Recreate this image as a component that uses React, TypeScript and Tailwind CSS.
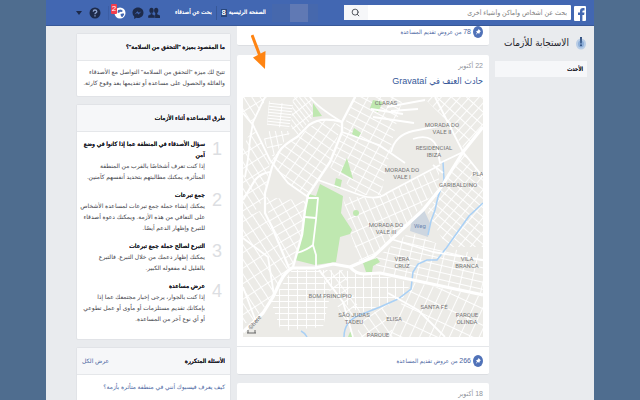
import React from 'react';
import { Search } from 'lucide-react';

const tips = [
  {
    title: ['سؤال الأصدقاء في المنطقة عما إذا كانوا في وضع', 'آمن'],
    lines: ['إذا كنت تعرف أشخاصًا بالقرب من المنطقة', 'المتأثرة، يمكنك مطالبتهم بتحديد أنفسهم كآمنين.'],
  },
  {
    title: ['جمع تبرعات'],
    lines: ['يمكنك إنشاء حملة جمع تبرعات لمساعدة الأشخاص', 'على التعافي من هذه الأزمة. ويمكنك دعوة أصدقاء', 'للتبرع وإظهار الدعم أيضًا.'],
  },
  {
    title: ['التبرع لصالح حملة جمع تبرعات'],
    lines: ['يمكنك إظهار دعمك من خلال التبرع. فالتبرع', 'بالقليل له مفعوله الكبير.'],
  },
  {
    title: ['عرض مساعدة'],
    lines: ['إذا كنت بالجوار، يرجى إخبار مجتمعك عما إذا', 'بإمكانك تقديم مستلزمات أو مأوى أو عمل تطوعي', 'أو أي نوع آخر من المساعدة.'],
  },
];

const places = [
  { x: 143, y: 8, rows: ['CLARAS'] },
  { x: 199, y: 30, rows: ['MORADA DO', 'VALE II'] },
  { x: 191, y: 53, rows: ['RESIDENCIAL', 'IBIZA'] },
  { x: 159, y: 75, rows: ['MORADA DO', 'VALE I'] },
  { x: 215, y: 90, rows: ['GARIBALDINO'] },
  { x: 235, y: 79, rows: ['PLA'] },
  { x: 143, y: 130, rows: ['MORADA DO', 'VALE III'] },
  { x: 159, y: 164, rows: ['VERA', 'CRUZ'] },
  { x: 224, y: 164, rows: ['VILA', 'BRANCA'] },
  { x: 87, y: 201, rows: ['BOM PRINCÍPIO'] },
  { x: 111, y: 220, rows: ['SÃO JUDAS', 'TADEU'] },
  { x: 151, y: 224, rows: ['ELISA'] },
  { x: 191, y: 212, rows: ['SANTA FÉ'] },
  { x: 224, y: 220, rows: ['PARQUE', 'OLINDA'] },
  { x: 135, y: 240, rows: ['PARQUE'] },
];

const grids = [
  { id: 'g1', w: 13, h: 3, angle: 6, area: 'M26 4L50 8L46 32L24 28Z' },
  { id: 'g2', w: 4, h: 11, angle: -38, area: 'M50 0H68L70 20L54 38L48 30Z' },
  { id: 'g3', w: 11, h: 7, angle: 28, area: 'M112 0H128L160 0L150 40L138 98L115 98L87 70L99 35Z' },
  { id: 'g4', w: 10, h: 8, angle: 35, area: 'M54 40L78 22L98 28L87 65L66 99L45 86L27 66L37 51Z' },
  { id: 'g5', w: 7, h: 12, angle: -32, area: 'M0 0H24L10 26L0 16ZM10 30L27 64L22 100L8 120L0 122V50Z' },
  { id: 'g6', w: 13, h: 8, angle: 57, area: 'M0 120L20 113L45 171L30 200L8 226L0 226Z' },
  { id: 'g7', w: 9, h: 6, angle: 0, area: 'M49 173L76 173L88 195L80 230L38 234L28 205Z' },
  { id: 'g8', w: 7, h: 10, angle: 42, area: 'M180 0H240V28L221 52L200 20Z' },
  { id: 'g9', w: 9, h: 7, angle: 40, area: 'M221 56L240 80V150L204 150L184 115L200 88Z' },
  { id: 'g10', w: 7, h: 14, angle: -24, area: 'M137 100L196 70L196 90L162 128L137 153L117 167L108 138L100 100Z' },
  { id: 'g11', w: 11, h: 7, angle: 13, area: 'M167 135L204 151L240 158V197L137 175L130 163Z' },
  { id: 'g12', w: 9, h: 15, angle: 25, area: 'M170 185L240 200V240H145L160 202Z' },
  { id: 'g13', w: 8, h: 10, angle: 0, area: 'M109 174L137 178L168 186L160 201L117 216L100 205L78 173Z' },
  { id: 'g14', w: 10, h: 8, angle: -30, area: 'M22 100L63 104L59 138L50 169L45 169L28 130Z' },
  { id: 'g15', w: 8, h: 9, angle: -36, area: 'M76 173L100 173L118 217L103 226Z' },
  { id: 'g16', w: 6, h: 9, angle: -12, area: 'M26 34L48 34L40 46L30 60L20 44Z' },
  { id: 'g17', w: 8, h: 12, angle: -35, area: 'M120 222L146 206L150 240H112Z' },
];

const CrisisMap: React.FC = () => (
  <svg viewBox="0 0 240 240" className="block w-full [direction:ltr]" role="img" aria-label="Gravataí">
    <defs>
      {grids.map((g) => (
        <pattern key={g.id} id={g.id} width={g.w} height={g.h} patternUnits="userSpaceOnUse" patternTransform={`rotate(${g.angle})`}>
          <path d={`M0 0H${g.w}M0 0V${g.h}`} stroke="#fff" strokeWidth="1.9" />
        </pattern>
      ))}
    </defs>
    <rect width="240" height="240" fill="#ecebe7" />
    {grids.map((g) => (
      <path key={g.id} d={g.area} fill={`url(#${g.id})`} />
    ))}

    {/* Parks */}
    <g fill="#bfe8b0">
      <path d="M70 6L79 19L70 20Z" />
      <path d="M111 31L118 36L115 41L109 37Z" />
      <path d="M104 61L110 82L98 75Z" />
      <path d="M93 81L99 83L97 92L91 90Z" />
      <path d="M77 87L100 99L98 116L109 133L107 137L97 140L93 165L72 168L52 163L59 138L62 113L66 97L73 99Z" />
      <circle cx="113" cy="116" r="3" />
      <path d="M130 3L140 5L135 15L127 11Z" />
      <path d="M120 166L134 161L137 165L130 169L129 175L123 175Z" />
      <path d="M105 240L107 235L110 236V240Z" />
    </g>
    <path d="M167 134L169 122L180 111L187 126L185 140Z" fill="#cdd6e0" />

    {/* Rivers */}
    <g fill="none" stroke="#a9d0f5" strokeWidth="1.5">
      <path d="M200 65L201 83L195 100L192 113L188 124L185 138" />
      <path d="M240 106L226 119L204 150L194 163H184L175 167L170 175L168 192L155 202L137 210L117 218Q101 224 101 240" />
      <path d="M58 234Q62 236 64 240" />
    </g>

    {/* Streets */}
    <g fill="none" stroke="#fff" strokeWidth="1.8" strokeLinejoin="round">
      <path d="M67 0Q74 10 99 25" />
      <path d="M112 0L99 25V35L87 65L75 83L65 98L62 113L59 138L50 170" strokeWidth="2.4" />
      <path d="M99 25Q78 19 66 28L54 40Q40 48 36 55L29 70L22 96V116L29 130L46 171" strokeWidth="2.2" />
      <path d="M22 0L10 25L7 43L5 62L2 80" />
      <path d="M0 16L10 28L27 63L45 86L65 100" />
      <path d="M0 103L12 83Q18 76 27 75" strokeWidth="2.2" />
      <path d="M65 101H75L73 123L70 148L73 158V170M70 148Q64 153 54 156M62 120L73 121" />
      <path d="M75 83L117 98Q134 104 144 96L197 68" />
      <path d="M99 35L136 48L162 66" />
      <path d="M148 55Q152 38 170 34L196 29" />
      <path d="M170 42Q188 36 194 50L197 66L220 55M190 68L200 76" />
      <path d="M128 12L160 17M130 20L171 26M144 10L182 3M148 14L175 12" />
      <path d="M192 0L220 55L240 80" />
      <path d="M148 142L190 155L240 163" />
      <path d="M145 196L175 213L202 240" />
      <path d="M0 141L25 160L31 198M0 190L12 222" />
      <path d="M76 173L100 205L110 240" />
    </g>
    <g fill="none" stroke="#fff" strokeWidth="3.2" strokeLinejoin="round">
      <path d="M0 235L20 216L30 200L37 185Q42 175 49 171H72L90 167L107 170Q113 177 121 177L137 176L170 183L240 198" />
      <path d="M107 170L130 160L150 141L180 113L197 92L220 55L240 30" />
    </g>

    <g fill="#757575" fontFamily="Roboto, sans-serif" fontSize="6" textAnchor="middle">
      {places.map((p, i) => (
        <text key={i} x={p.x} y={p.y}>
          {p.rows.map((row, r) => (
            <tspan key={row} x={p.x} dy={r ? 7 : 0}>{row}</tspan>
          ))}
        </text>
      ))}
      <text x="177" y="131" fill="#6e86b0" fontSize="6">Weg</text>
      <text transform="translate(8 233) rotate(-50)" fill="#666" fontSize="6" textAnchor="start">©here</text>
    </g>
    <path d="M4 236H13M5 233V236M12 233V236" stroke="#666" strokeWidth="1" />
  </svg>
);

const PinIcon: React.FC = () => (
  <svg viewBox="0 0 10 12" className="h-3 w-[10px] shrink-0" aria-hidden="true">
    <ellipse cx="5" cy="6" rx="5" ry="6" fill="#5072b8" />
    <path d="M5.6 3L8 5.4L7 5.7L6.3 7.8L4.7 6.9L2.8 9L4 6.3L3 5.2L5 4.6Z" fill="#fff" />
  </svg>
);

const OffersLink: React.FC<{ count: number }> = ({ count }) => (
  <a href="#offers" className="flex items-center gap-[2px] text-[6px] leading-3 text-[#4a659f]">
    <PinIcon />
    <span className="whitespace-nowrap"><span className="text-[7px]">{count}</span> من عروض تقديم المساعدة</span>
  </a>
);

const TopBar: React.FC = () => (
  <header className="relative z-10 flex h-[26px] items-center border-b border-[#385898] bg-[#4267b2] pr-[7px] pl-[30px] text-white">
    <a href="#home" aria-label="Facebook" className="block shrink-0">
      <svg viewBox="0 0 14 16" className="h-4 w-[14px]">
        <rect x="1" y="1" width="12" height="15" rx="1" fill="#fff" />
        <path d="M7 16V10H5V7.500H7V6Q7 3 10 3H11.500V5.500H10.300Q9.400 5.500 9.400 6.500V7.500H11.500L11.100 10H9.400V16Z" fill="#4267b2" />
      </svg>
    </a>
    <form className="mr-[2px] flex h-[15px] min-w-0 flex-1 rounded-[1px] bg-white">
      <input
        type="text"
        aria-label="بحث"
        placeholder="بحث عن أشخاص وأماكن وأشياء أخرى"
        className="min-w-0 flex-1 px-1 text-[7px] leading-[15px] text-gray-700 outline-none placeholder:text-[#7d7d7d]"
      />
      <button type="button" aria-label="ابحث" className="flex w-6 items-center justify-center bg-[#f6f7f9] text-[#4b4f56]">
        <Search size={9} strokeWidth={2.5} />
      </button>
    </form>
    <div className="mr-[26px] flex h-[18px] w-[46px] shrink-0">
      <div className="w-[10px] bg-[#4668ad]" />
      <div className="w-[18px] bg-[#6079b4]" />
      <div className="flex-1 bg-[#4668ad]" />
    </div>
    <nav className="mr-[6px] flex shrink-0 items-center text-[6px] whitespace-nowrap [text-shadow:0_0_#fff]">
      <a href="#home" className="flex items-center gap-[2px]">
        الصفحة الرئيسية
        <span className="flex h-2 w-[6px] items-center justify-center bg-[#29487d] text-[7px] leading-none">8</span>
      </a>
      <span className="mx-1 h-[14px] w-px bg-[#385898]" />
      <a href="#friends">بحث عن أصدقاء</a>
    </nav>
    <div className="mr-[15px] flex shrink-0 items-center text-[#1d2a4a]">
      <button type="button" aria-label="طلبات الصداقة">
        <svg viewBox="0 0 12 12" className="block h-3 w-3" fill="currentColor">
          <ellipse cx="8.200" cy="3.500" rx="2.100" ry="2.800" />
          <path d="M6 11V9L7.300 7.500V6H9.200V7.300L12 8.500V11Z" />
          <ellipse cx="3.500" cy="3.500" rx="2.100" ry="2.800" />
          <path d="M0 11V8.500L2.600 7.300V6H4.600V7.400L6.800 8.500V11Z" stroke="#4267b2" strokeWidth=".4" />
        </svg>
      </button>
      <button type="button" aria-label="الرسائل" className="mr-1">
        <svg viewBox="0 0 12 12" className="block h-3 w-3">
          <path d="M6 .5C2.700 .5 .5 2.900 .5 5.700Q.5 8 2.200 9.500V12L4.300 10.800Q5 11 6 11C9.300 11 11.500 8.500 11.500 5.700S9.300 .5 6 .5Z" fill="currentColor" />
          <path d="M2.500 7.500L5.400 4.300L6.900 5.800L9.500 4.300L6.600 7.500L5.100 6Z" fill="#4267b2" />
        </svg>
      </button>
      <button type="button" aria-label="الإشعارات" className="relative mr-[6px]">
        <svg viewBox="0 0 12 12" className="block h-3 w-3">
          <circle cx="6" cy="6" r="5.500" fill="#fff" />
          <path d="M4 3L7 2.500L9 4L7.500 5L6 4.800L5 6L3.500 5.500ZM6.500 7L9.500 6.200L10.200 7.500L8.500 10L7 9.500Z" fill="#4267b2" />
        </svg>
        <span className="absolute -top-[3px] -left-[3px] flex h-[10px] w-[6px] items-center justify-center rounded-[1px] bg-[#f03d4d] text-[8px] leading-none text-white">2</span>
      </button>
      <span className="mr-[5px] h-[14px] w-px bg-[#3b5ea6]" />
      <button type="button" aria-label="مساعدة" className="mr-[7px]">
        <svg viewBox="0 0 12 12" className="block h-3 w-3">
          <circle cx="6" cy="6" r="5.500" fill="currentColor" />
          <path d="M4.200 4.600Q4.300 3 6 3T7.800 4.500Q7.800 5.400 6.800 5.900Q6 6.300 6 7.300M6 8.300V9.500" fill="none" stroke="#8ea2cd" strokeWidth="1.300" />
        </svg>
      </button>
      <button type="button" aria-label="القائمة" className="mr-[7px]">
        <svg viewBox="0 0 6 4" className="block h-1 w-[6px]">
          <path d="M0 0H6L3 4Z" fill="currentColor" />
        </svg>
      </button>
    </div>
  </header>
);

const Card: React.FC<{ title: string; action?: string; children: React.ReactNode }> = ({ title, action, children }) => (
  <section className="rounded-[2px] border border-[#e1e3e7] bg-white">
    <div className="flex h-[27px] items-center justify-between border-b border-[#e5e7ea] bg-[#f6f7f9] px-[5px]">
      <h3 className="text-[6px] whitespace-nowrap text-[#1d2129] [text-shadow:0_0_#1d2129,0_0_#1d2129]">{title}</h3>
      {action && <a href="#all" className="text-[6px] whitespace-nowrap text-[#4a659f]">{action}</a>}
    </div>
    {children}
  </section>
);

const App: React.FC = () => {
  return (
    <div dir="rtl" className="h-screen overflow-hidden bg-[#4f6d8f] px-[46px] font-['Liberation_Sans','DejaVu_Sans_Condensed','DejaVu_Sans',sans-serif]">
      <div className="min-h-full bg-[#e9ebee]">
        <TopBar />
        <div className="flex items-start gap-[6px] pr-[7px] pl-[30px]">
          {/* Page title and tabs */}
          <aside className="w-[92px] shrink-0 pt-[10px]">
            <div className="flex items-center gap-[6px]">
              <svg viewBox="0 0 12 14" className="h-[14px] w-3 shrink-0" aria-hidden="true">
                <ellipse cx="6" cy="8" rx="5" ry="5.500" fill="#b9cde6" />
                <ellipse cx="6" cy="8" rx="3" ry="3.500" fill="#8fb0da" />
                <path d="M5 1H7L6.700 7.500H5.300Z" fill="#2f4f80" />
                <circle cx="6" cy="9.200" r="1" fill="#2f4f80" />
              </svg>
              <h1 className="text-[10px] leading-[14px] whitespace-nowrap text-[#1d2129]">الاستجابة للأزمات</h1>
            </div>
            <a href="#latest" className="mt-[11px] block bg-[#f6f7f9] px-1 text-[6px] leading-4 text-[#1d2129] [text-shadow:0_0_#1d2129,0_0_#1d2129]">الأحدث</a>
          </aside>

          {/* Crisis feed */}
          <main className="relative min-w-0 flex-1">
            <section className="rounded-b-[2px] border-b border-[#dcdee2] bg-white px-[6px] pb-[7px]">
              <OffersLink count={78} />
            </section>
            <section className="mt-[9px] rounded-[2px] border-b border-[#dcdee2] bg-white">
              <div className="px-[6px] pt-[6px]">
                <p className="text-[7px] leading-[10px] text-[#90949c]">22 أكتوبر</p>
                <h2 className="mt-[2px] text-[9px] leading-4 text-[#365899]">
                  <a href="#crisis">حادث العنف في Gravataí</a>
                </h2>
                <div className="mt-2">
                  <CrisisMap />
                </div>
              </div>
              <div className="mt-[9px] border-t border-[#e5e7ea] px-[6px] pt-2 pb-[7px]">
                <OffersLink count={266} />
              </div>
            </section>
            <section className="mt-2 h-10 rounded-t-[2px] bg-white px-[6px] pt-[6px]">
              <p className="text-[7px] leading-[10px] text-[#90949c]">18 أكتوبر</p>
            </section>
            <svg viewBox="0 0 16 36" className="absolute top-2 left-[14px] h-9 w-4" aria-hidden="true">
              <path d="M1 1L9 22" stroke="#ff8412" strokeWidth="3" />
              <path d="M2 23.500L14.500 17L14 35Z" fill="#ff8412" />
            </svg>
          </main>

          {/* Help column */}
          <aside className="flex w-[155px] shrink-0 flex-col gap-[7px] pt-[7px] font-['Liberation_Sans','DejaVu_Sans',sans-serif]">
            <Card title={'ما المقصود بميزة "التحقق من السلامة"؟'}>
              <p className="px-[5px] pt-[6px] pb-[7px] text-[6px] leading-[11px] whitespace-nowrap text-[#3f434a]">
                تتيح لك ميزة "التحقق من السلامة" التواصل مع الأصدقاء
                <br />
                والعائلة والحصول على مساعدة أو تقديمها بعد وقوع كارثة.
              </p>
            </Card>
            <Card title="طرق المساعدة أثناء الأزمات">
              <ol className="flex flex-col gap-[7px] px-[7px] pt-[7px] pb-[14px]">
                {tips.map((tip, i) => (
                  <li key={i} className="flex gap-[6px]">
                    <span className="w-3 shrink-0 text-center text-[18px] leading-5 text-[#dcdee2]">{i + 1}</span>
                    <div className="text-[6px] leading-[11px] whitespace-nowrap text-[#3f434a]">
                      {tip.title.map((line) => (
                        <h4 key={line} className="text-[#1d2129] [text-shadow:0_0_#1d2129,0_0_#1d2129]">{line}</h4>
                      ))}
                      {tip.lines.map((line) => (
                        <p key={line}>{line}</p>
                      ))}
                    </div>
                  </li>
                ))}
              </ol>
            </Card>
            <Card title="الأسئلة المتكررة" action="عرض الكل">
              <a href="#faq" className="block border-b border-[#e5e7ea] px-[5px] text-[6px] leading-[25px] whitespace-nowrap text-[#4a659f]">
                كيف يعرف فيسبوك أنني في منطقة متأثرة بأزمة؟
              </a>
              <div className="h-6" />
            </Card>
          </aside>
        </div>
      </div>
    </div>
  );
};

export default App;
